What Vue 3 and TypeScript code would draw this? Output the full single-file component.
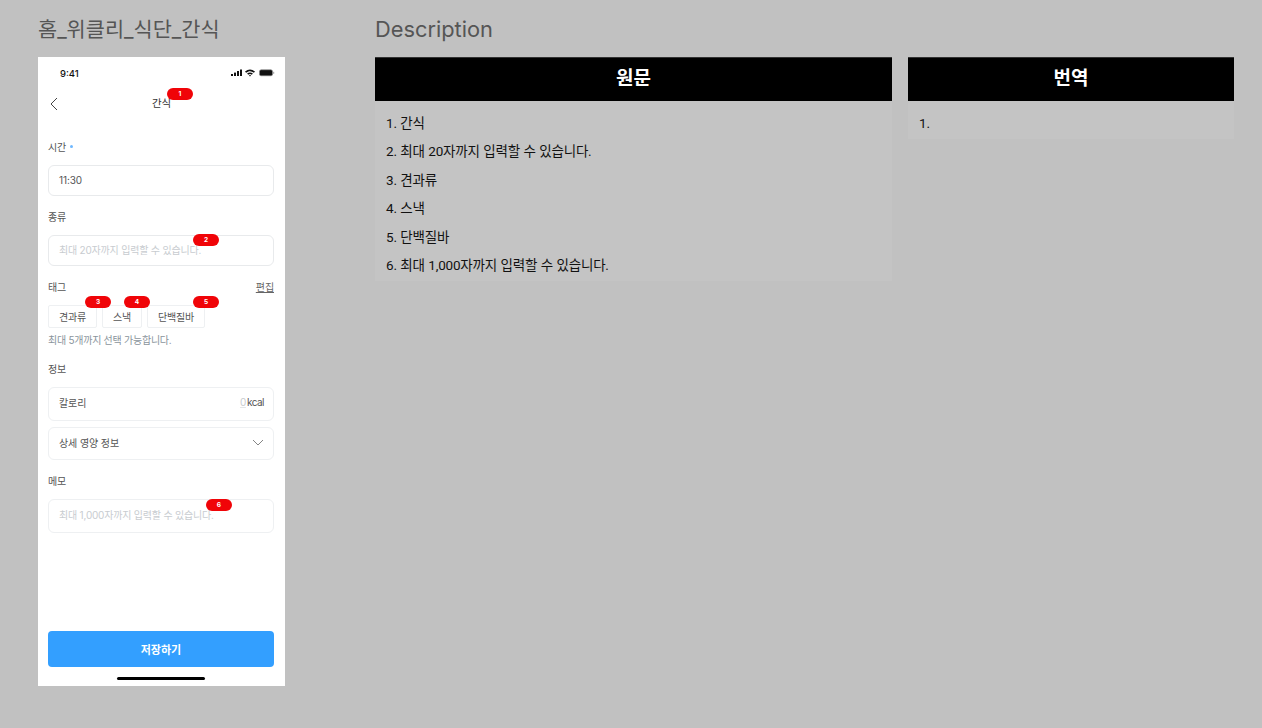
<script setup lang="ts">
const originals: string[] = [
  '간식',
  '최대 20자까지 입력할 수 있습니다.',
  '견과류',
  '스낵',
  '단백질바',
  '최대 1,000자까지 입력할 수 있습니다.',
]
const tags = [
  { label: '견과류', no: 3 },
  { label: '스낵', no: 4 },
  { label: '단백질바', no: 5 },
]
</script>

<template>
  <div class="page">
    <section class="left">
      <h1 class="title">홈_위클리_식단_간식</h1>
      <div class="phone">
        <div class="status">
          <span class="time">9:41</span>
          <svg width="44" height="8" viewBox="0 0 44 8" class="status-icons">
            <rect x="0" y="5" width="2" height="2" fill="#111" />
            <rect x="3" y="3.6" width="2" height="3.4" fill="#111" />
            <rect x="6" y="2" width="2" height="5" fill="#111" />
            <rect x="9" y="0.5" width="2" height="6.5" fill="#111" />
            <path d="M14 2.6C17.4 -0.2 20.6 -0.2 24 2.6L22.9 3.8C20.2 1.7 17.8 1.7 15.1 3.8Z" fill="#111" />
            <path d="M16.1 4.6C17.9 3.2 20.1 3.2 21.9 4.6L20.8 5.7C19.7 4.9 18.3 4.9 17.2 5.7Z" fill="#111" />
            <path d="M18 6.5L19 5.7L20 6.5L19 7.5Z" fill="#111" />
            <rect x="28.5" y="0.8" width="13" height="6" rx="1.6" fill="#111" stroke="#888" stroke-width="0.6" />
            <rect x="42.2" y="2.8" width="1" height="2" fill="#999" />
          </svg>
        </div>
        <div class="nav">
          <svg width="10" height="14" viewBox="0 0 10 14" class="back">
            <path d="M8 1L2 7L8 13" fill="none" stroke="#444" stroke-width="1" />
          </svg>
          <span class="nav-title">간식<span class="badge badge-nav">1</span></span>
        </div>

        <div class="form">
          <div class="label label-first">시간 <i class="req"></i></div>
          <div class="field"><span class="value">11:30</span></div>

          <div class="label">종류</div>
          <div class="field">
            <span class="placeholder">최대 20자까지 입력할 수 있습니다.<span class="badge badge-type">2</span></span>
          </div>

          <div class="label label-row">
            <span>태그</span>
            <span class="edit">편집</span>
          </div>
          <div class="chips">
            <div v-for="t in tags" :key="t.no" class="chip">
              {{ t.label }}<span class="badge badge-chip">{{ t.no }}</span>
            </div>
          </div>
          <div class="hint">최대 5개까지 선택 가능합니다.</div>

          <div class="label label-info">정보</div>
          <div class="field field-tall">
            <span class="value">칼로리</span>
            <span class="kcal"><span class="zero">0</span>kcal</span>
          </div>
          <div class="field field-tall field-second">
            <span class="value">상세 영양 정보</span>
            <svg width="12" height="7" viewBox="0 0 12 7">
              <path d="M1 1L6 6L11 1" fill="none" stroke="#777" stroke-width="0.9" />
            </svg>
          </div>

          <div class="label">메모</div>
          <div class="field field-tall">
            <span class="placeholder">최대 1,000자까지 입력할 수 있습니다.<span class="badge badge-memo">6</span></span>
          </div>
        </div>

        <div class="footer">
          <button class="save" type="button">저장하기</button>
          <div class="home"></div>
        </div>
      </div>
    </section>

    <section class="right">
      <h2 class="title title-en">Description</h2>
      <div class="tables">
        <div class="col col-a">
          <div class="head">원문</div>
          <ol class="list">
            <li v-for="(t, i) in originals" :key="i">{{ i + 1 }}. {{ t }}</li>
          </ol>
        </div>
        <div class="col col-b">
          <div class="head">번역</div>
          <ol class="list">
            <li>1.</li>
          </ol>
        </div>
      </div>
    </section>
  </div>
</template>

<style>
html, body { margin: 0; background: #c1c1c1; }
</style>

<style scoped>
* { box-sizing: border-box; }
.page {
  width: 1262px;
  height: 728px;
  overflow: hidden;
  display: flex;
  gap: 90px;
  padding-left: 38px;
  background: #c1c1c1;
  font-family: Inter, "Noto Sans CJK KR", sans-serif;
}
.left { width: 247px; flex: none; }
.right { flex: none; width: 859px; }
.title {
  margin: 0;
  height: 57px;
  padding-top: 15px;
  font-size: 20.8px;
  line-height: 29px;
  font-weight: 400;
  color: #555;
  white-space: nowrap;
}
.title-en { font-size: 21.8px; }
.phone {
  height: 629px;
  background: #fff;
  display: flex;
  flex-direction: column;
  color: #333;
  font-size: 10px;
  letter-spacing: -0.1px;
}
.status {
  height: 30px;
  padding: 11px 10px 0 22px;
  display: flex;
  justify-content: space-between;
  align-items: flex-start;
}
.time { font-size: 9.5px; line-height: 12px; font-weight: 500; color: #111; letter-spacing: 0; }
.status-icons { margin-top: 1px; }
.nav {
  height: 33px;
  position: relative;
  display: flex;
  align-items: center;
  justify-content: center;
}
.back { position: absolute; left: 11px; top: 10px; }
.nav-title { position: relative; font-size: 10.5px; color: #333; line-height: 14px; }
.badge {
  position: absolute;
  z-index: 1;
  width: 26px;
  height: 12px;
  border-radius: 6px;
  background: #f00408;
  color: #fff;
  font-size: 6.5px;
  font-weight: 700;
  line-height: 12px;
  text-align: center;
  letter-spacing: 0;
}
.badge-nav { left: 15px; top: -9px; }
.badge-type { right: -18px; top: -8px; }
.badge-memo { right: -18px; top: -8px; }
.badge-chip { top: -10px; }
.chip:nth-child(1) .badge-chip { right: -15px; }
.chip:nth-child(2) .badge-chip { right: -9px; }
.chip:nth-child(3) .badge-chip { right: -15px; }
.form { padding: 0 11px 0 10px; flex: 1; }
.label {
  height: 14px;
  line-height: 14px;
  margin: 14px 0 11px;
  color: #555;
  font-size: 10px;
}
.label-first { margin-top: 20px; }
.req {
  display: inline-block;
  width: 3px;
  height: 3px;
  margin: 0 0 3px 1px;
  border-radius: 50%;
  background: #6fb8ff;
}
.label-row { display: flex; justify-content: space-between; }
.edit { color: #666; text-decoration: underline; }
.field {
  height: 31px;
  border: 1px solid #e8eaec;
  border-radius: 6px;
  padding: 0 9px 2px 10px;
  display: flex;
  align-items: center;
  justify-content: space-between;
}
.field-tall { height: 34px; border-color: #eef0f2; padding-bottom: 4px; }
.field-second { margin-top: 6px; height: 33px; padding-bottom: 2px; }
.value { color: #555; }
.placeholder { position: relative; color: #c8ccd0; letter-spacing: -0.2px; }
.kcal { color: #555; letter-spacing: -0.5px; }
.zero { color: #c8ccd0; margin-right: 1px; text-decoration: underline; text-decoration-color: #e4e6e8; }
.chips { display: flex; gap: 5px; height: 23px; }
.chip {
  position: relative;
  height: 23px;
  padding: 0 10px;
  border: 1px solid #eef0f2;
  border-radius: 2px;
  display: flex;
  align-items: center;
  color: #555;
  letter-spacing: -0.2px;
}
.hint { margin-top: 5px; height: 14px; line-height: 14px; color: #8a949c; letter-spacing: -0.26px; }
.label-info { margin-top: 15px; }
.footer { padding: 0 11px 0 10px; }
.save {
  display: block;
  width: 100%;
  height: 36px;
  border: 0;
  border-radius: 4px;
  background: #339fff;
  color: #fff;
  font: 600 11px Inter, "Noto Sans CJK KR", sans-serif;
}
.home {
  width: 88px;
  height: 3px;
  margin: 10px auto 6px;
  border-radius: 2px;
  background: #000;
}
.tables { display: flex; gap: 16px; align-items: flex-start; }
.col-a { width: 517px; }
.col-b { width: 326px; }
.head {
  height: 44px;
  background: #000;
  border-top: 1px solid #333;
  color: #fff;
  font-size: 19px;
  font-weight: 700;
  line-height: 42px;
  text-align: center;
}
.list {
  list-style: none;
  margin: 0;
  padding: 8px 11px 2px;
  background: #c4c4c4;
  color: #111;
  font-family: Roboto, "Noto Sans CJK KR", sans-serif;
  font-size: 13.5px;
  letter-spacing: -0.2px;
  word-spacing: 0.4px;
}
.list li { height: 28.4px; line-height: 28.4px; }
</style>
